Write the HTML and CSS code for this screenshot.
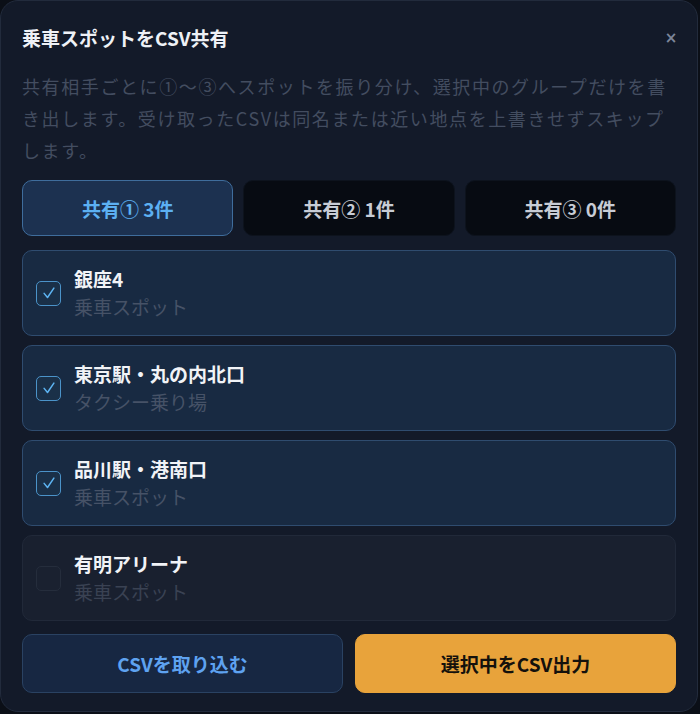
FILE: index.html
```html
<!DOCTYPE html>
<html lang="ja">
<head>
<meta charset="utf-8">
<title>乗車スポットをCSV共有</title>
<link rel="stylesheet" href="styles.css">
</head>
<body>
<div class="dialog">
  <div class="header">
    <h1 class="title">乗車スポットをCSV共有</h1>
    <button class="close" aria-label="閉じる">×</button>
  </div>
  <p class="desc">共有相手ごとに①〜③へスポットを振り分け、選択中のグループだけを書<br>き出します。受け取ったCSVは同名または近い地点を上書きせずスキップ<br>します。</p>
  <div class="tabs">
    <button class="tab active">共有① 3件</button>
    <button class="tab">共有② 1件</button>
    <button class="tab">共有③ 0件</button>
  </div>
  <div class="list">
    <div class="item on">
      <span class="check"><svg viewBox="0 0 24 24" width="18" height="18"><path d="M5.5 12.5 L10 18 L18.5 5.5" fill="none" stroke="#5db4f2" stroke-width="2" stroke-linecap="round" stroke-linejoin="round"/></svg></span>
      <div class="text"><div class="name">銀座4</div><div class="sub">乗車スポット</div></div>
    </div>
    <div class="item on">
      <span class="check"><svg viewBox="0 0 24 24" width="18" height="18"><path d="M5.5 12.5 L10 18 L18.5 5.5" fill="none" stroke="#5db4f2" stroke-width="2" stroke-linecap="round" stroke-linejoin="round"/></svg></span>
      <div class="text"><div class="name">東京駅・丸の内北口</div><div class="sub">タクシー乗り場</div></div>
    </div>
    <div class="item on">
      <span class="check"><svg viewBox="0 0 24 24" width="18" height="18"><path d="M5.5 12.5 L10 18 L18.5 5.5" fill="none" stroke="#5db4f2" stroke-width="2" stroke-linecap="round" stroke-linejoin="round"/></svg></span>
      <div class="text"><div class="name">品川駅・港南口</div><div class="sub">乗車スポット</div></div>
    </div>
    <div class="item off">
      <span class="check"></span>
      <div class="text"><div class="name">有明アリーナ</div><div class="sub">乗車スポット</div></div>
    </div>
  </div>
  <div class="actions">
    <button class="btn import">CSVを取り込む</button>
    <button class="btn export">選択中をCSV出力</button>
  </div>
</div>
</body>
</html>
```

FILE: styles.css
```css
* { box-sizing: border-box; }
html, body {
  margin: 0;
  padding: 0;
  background: #0b0f17;
}
body {
  font-family: "Noto Sans CJK JP", "Noto Sans", sans-serif;
  color: #e8ecf2;
}
.dialog {
  width: 698px;
  height: 712px;
  background: #131a29;
  border: 1px solid #222b3c;
  border-radius: 18px;
  padding: 21px 21px 18px;
  display: flex;
  flex-direction: column;
}
.header {
  display: flex;
  align-items: center;
  justify-content: space-between;
  height: 32px;
}
.title {
  margin: 0;
  font-size: 19px;
  font-weight: 700;
  line-height: 32px;
  color: #eef1f6;
}
.close {
  background: none;
  border: none;
  color: #7c8699;
  font-size: 15px;
  font-weight: 700;
  padding: 0;
  width: 14px;
  line-height: 32px;
  margin-right: -2px;
  font-family: "DejaVu Sans", sans-serif;
}
.desc {
  margin: 16px -16px 14px 0;
  font-size: 18px;
  line-height: 32px;
  letter-spacing: 1.6px;
  white-space: nowrap;
  color: #434d60;
}
.tabs {
  display: grid;
  grid-template-columns: 1fr 1fr 1fr;
  gap: 10px;
}
.tab {
  height: 56px;
  border-radius: 10px;
  border: 1px solid #0d131d;
  background: #070b12;
  color: #c7ccd5;
  font-family: inherit;
  font-size: 19px;
  font-weight: 700;
}
.tab.active {
  background: #1c3150;
  border-color: #3f6d9c;
  color: #5cb0f2;
}
.list {
  margin-top: 14px;
  display: flex;
  flex-direction: column;
  gap: 9px;
}
.item {
  height: 86px;
  border-radius: 10px;
  border: 1px solid #2f4c6f;
  background: #182a42;
  display: flex;
  align-items: center;
  padding: 0 13px;
  gap: 13px;
}
.item.off {
  background: #19202f;
  border-color: #212939;
}
.check {
  width: 25px;
  height: 25px;
  border-radius: 5px;
  border: 1.5px solid #4b93c9;
  background: #1a3048;
  display: flex;
  align-items: center;
  justify-content: center;
  flex-shrink: 0;
}
.item.off .check {
  border-color: #252d3c;
  background: #1a2130;
}
.text {
  display: flex;
  flex-direction: column;
}
.name {
  font-size: 19px;
  font-weight: 700;
  line-height: 28px;
  color: #f1f3f7;
}
.sub {
  font-size: 19px;
  line-height: 28px;
  color: #465267;
}
.item.off .sub {
  color: #3a4253;
}
.actions {
  margin-top: 13px;
  display: grid;
  grid-template-columns: 1fr 1fr;
  gap: 12px;
}
.btn {
  height: 59px;
  border-radius: 10px;
  font-family: inherit;
  font-size: 19px;
  font-weight: 700;
}
.btn.import {
  background: #172742;
  border: 1px solid #2a4262;
  color: #5ea2f0;
}
.btn.export {
  background: #e8a33b;
  border: 1px solid #e8a33b;
  color: #14110c;
}
```
